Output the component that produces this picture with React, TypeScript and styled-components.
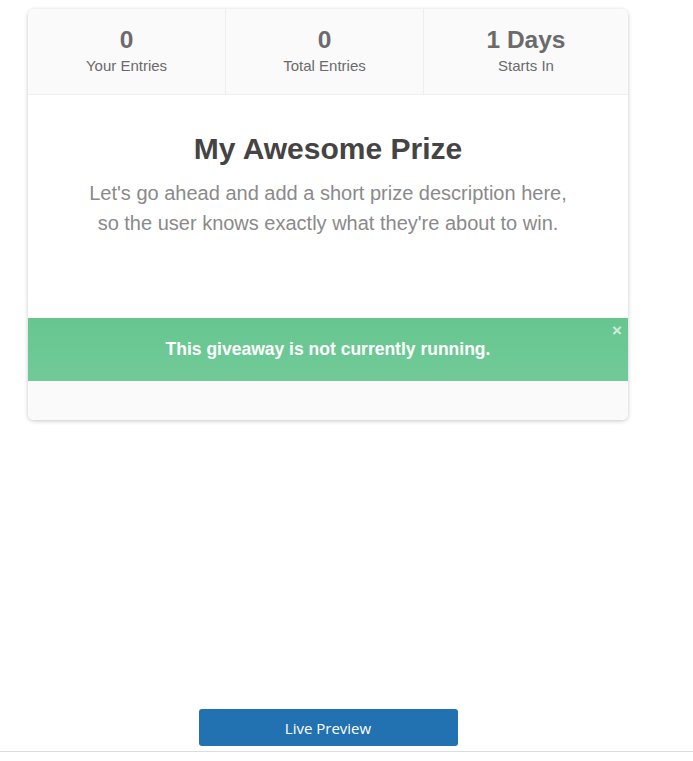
import styled, { createGlobalStyle } from "styled-components";

const GlobalStyle = createGlobalStyle`
  html, body {
    margin: 0;
    padding: 0;
    background: #fff;
  }
  body {
    font-family: "Liberation Sans", Arial, sans-serif;
  }
`;

const Page = styled.div`
  height: 761px;
  display: flex;
  flex-direction: column;
  box-sizing: border-box;
`;

const Content = styled.div`
  flex: 1;
  padding: 9px 0 0 28px;
`;

const Card = styled.div`
  width: 600px;
  background: #fff;
  border-radius: 6px;
  box-shadow: 0 1px 4px rgba(0, 0, 0, 0.22);
  overflow: hidden;
`;

const Stats = styled.div`
  display: grid;
  grid-template-columns: 198px 198px 1fr;
  background: #fafafa;
  border-bottom: 1px solid #eeeeee;
`;

const Stat = styled.div<{ $last?: boolean }>`
  height: 85px;
  box-sizing: border-box;
  padding-top: 17px;
  display: flex;
  flex-direction: column;
  align-items: center;
  border-right: ${(p) => (p.$last ? "none" : "1px solid #eeeeee")};
  color: #6b6b6b;
`;

const StatValue = styled.div`
  font-size: 24.5px;
  font-weight: bold;
  line-height: 28px;
`;

const StatLabel = styled.div`
  font-size: 15px;
  line-height: 18px;
  margin-top: 3px;
`;

const Body = styled.div`
  padding: 36px 40px 0;
  height: 223px;
  text-align: center;
  box-sizing: border-box;
`;

const Title = styled.h1`
  margin: 0;
  font-size: 30px;
  line-height: 36px;
  font-weight: bold;
  color: #444444;
`;

const Description = styled.p`
  margin: 11px auto 0;
  max-width: 500px;
  font-size: 20px;
  line-height: 30px;
  color: #8a8a8a;
`;

const Notice = styled.div`
  position: relative;
  height: 63px;
  display: flex;
  align-items: center;
  justify-content: center;
  background: linear-gradient(#67c690, #70ca97);
  color: #fff;
  font-size: 17.5px;
  font-weight: bold;
`;

const Close = styled.span`
  position: absolute;
  top: 3px;
  right: 6px;
  font-size: 17px;
  line-height: 20px;
  font-weight: bold;
  color: rgba(255, 255, 255, 0.7);
`;

const CardFooter = styled.div`
  height: 39px;
  background: #fafafa;
`;

const Footer = styled.div`
  display: flex;
  justify-content: center;
  padding-right: 37px;
  padding-bottom: 5px;
  border-bottom: 1px solid #dddddd;
  margin-bottom: 9px;
`;

const PreviewButton = styled.button`
  width: 259px;
  height: 37px;
  border: none;
  border-radius: 3px;
  background: #2271b1;
  color: #fff;
  font-family: "Open Sans", "Noto Sans", sans-serif;
  font-size: 15px;
  cursor: pointer;
`;

function App() {
  return (
    <>
      <GlobalStyle />
      <Page>
        <Content>
          <Card>
            <Stats>
              <Stat>
                <StatValue>0</StatValue>
                <StatLabel>Your Entries</StatLabel>
              </Stat>
              <Stat>
                <StatValue>0</StatValue>
                <StatLabel>Total Entries</StatLabel>
              </Stat>
              <Stat $last>
                <StatValue>1 Days</StatValue>
                <StatLabel>Starts In</StatLabel>
              </Stat>
            </Stats>
            <Body>
              <Title>My Awesome Prize</Title>
              <Description>
                Let's go ahead and add a short prize description here, so the
                user knows exactly what they're about to win.
              </Description>
            </Body>
            <Notice>
              This giveaway is not currently running.
              <Close>×</Close>
            </Notice>
            <CardFooter />
          </Card>
        </Content>
        <Footer>
          <PreviewButton>Live Preview</PreviewButton>
        </Footer>
      </Page>
    </>
  );
}

export default App;
